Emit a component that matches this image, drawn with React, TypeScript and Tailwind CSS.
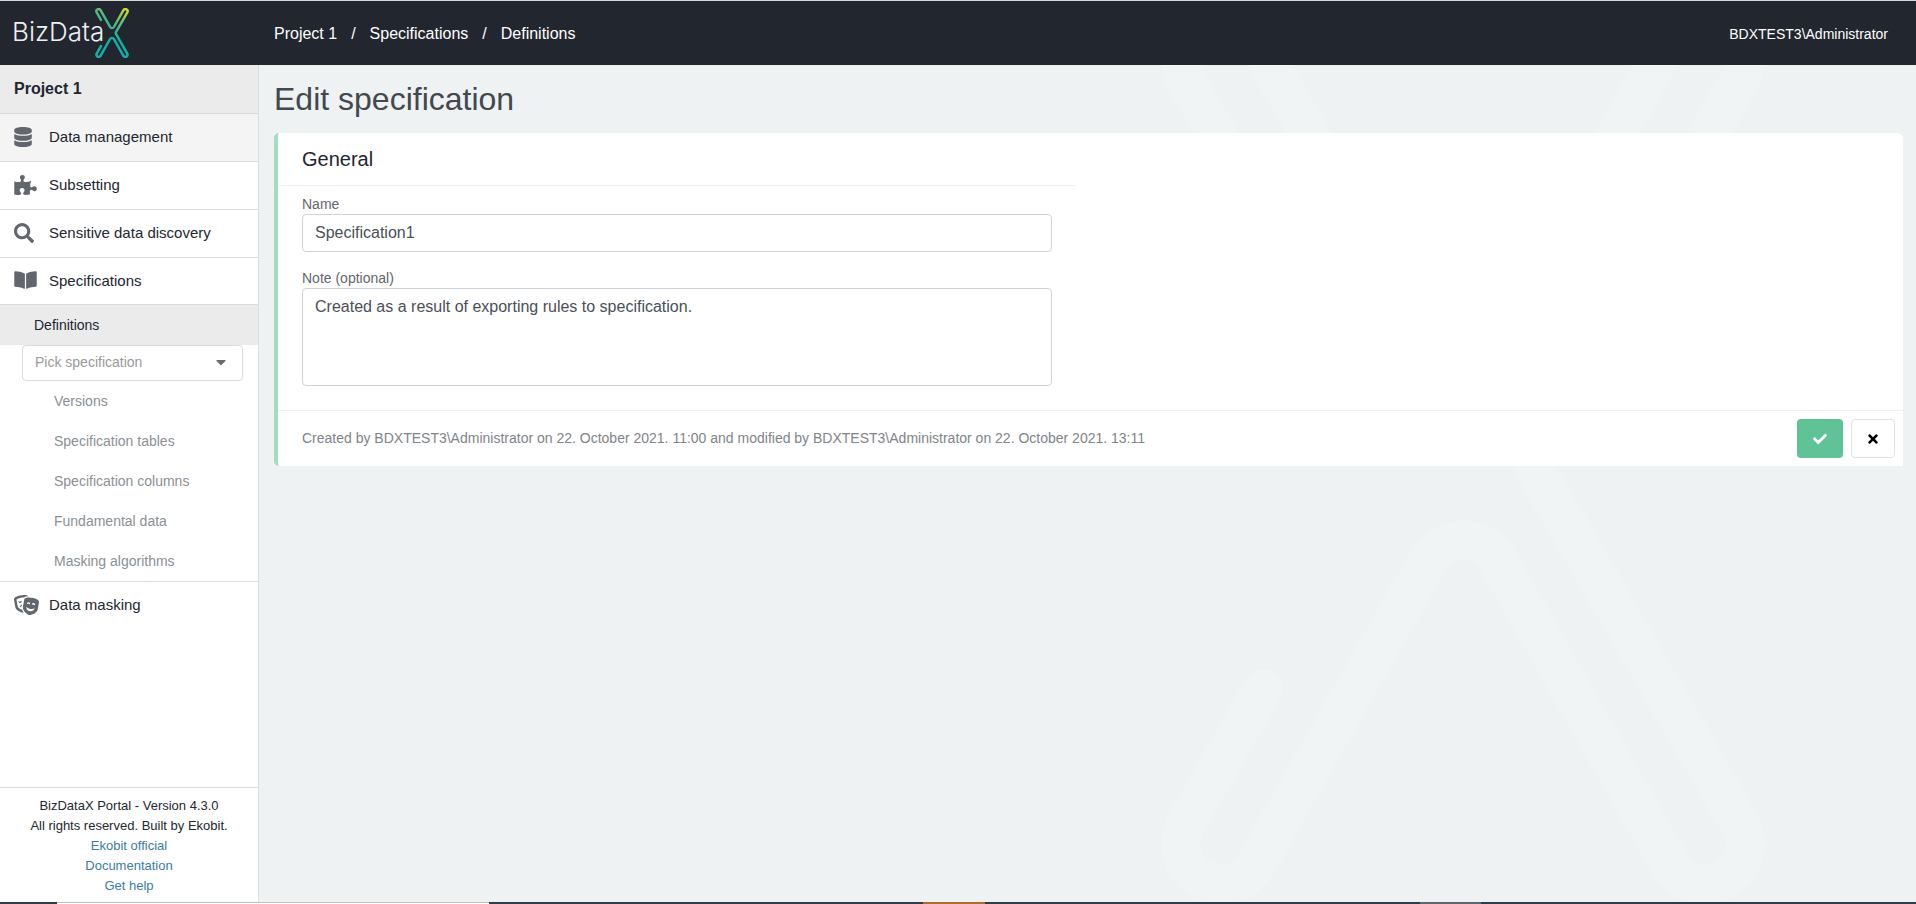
import { useId } from 'react'
import type { ReactNode } from 'react'
import {
  FaBookOpen,
  FaCaretDown,
  FaCheck,
  FaDatabase,
  FaPuzzlePiece,
  FaSearch,
  FaTheaterMasks,
  FaTimes,
} from 'react-icons/fa'

const X_PATH =
  'M104 215 L27 80 A40 40 0 1 1 97 40 L269 343 A40 40 0 0 0 339 343 L511 40 A40 40 0 1 1 581 80 L376 435 Q366 452 376 469 L581 824 A40 40 0 1 1 511 864 L339 561 A40 40 0 0 0 269 561 L97 864 A40 40 0 1 1 27 824 L104 689'

const breadcrumbs = ['Project 1', 'Specifications', 'Definitions']

const specificationLinks = [
  'Versions',
  'Specification tables',
  'Specification columns',
  'Fundamental data',
  'Masking algorithms',
]

const footerLinks = ['Ekobit official', 'Documentation', 'Get help']

const XMark = ({ className, stroke }: XMarkProps) => (
  <svg className={className} viewBox="0 0 608 904" fill="none" aria-hidden="true">
    <path d={X_PATH} stroke={stroke} strokeWidth="39" strokeLinecap="round" strokeLinejoin="round" />
  </svg>
)

const Logo = () => {
  const gradientId = useId()
  return (
    <a href="#" className="flex items-center text-[#eef0f1]">
      <span className="pb-[3px] font-[Inter,sans-serif] text-[26px] font-light leading-none">BizData</span>
      <svg className="-ml-[9px] h-[50px] w-[34px]" viewBox="0 0 608 904" fill="none" aria-hidden="true">
        <defs>
          <linearGradient id={gradientId} gradientUnits="userSpaceOnUse" x1="580" y1="20" x2="270" y2="520">
            <stop offset="0" stopColor="#d3dc2c" />
            <stop offset="0.5" stopColor="#5cba7d" />
            <stop offset="1" stopColor="#0fb2a8" />
          </linearGradient>
        </defs>
        <path d={X_PATH} stroke={`url(#${gradientId})`} strokeWidth="44" strokeLinecap="round" strokeLinejoin="round" />
      </svg>
    </a>
  )
}

const Header = () => (
  <header className="relative flex h-[65px] shrink-0 items-center border-t border-[#d3d8d6] bg-[#22262f] text-white">
    <div className="w-[259px] shrink-0 pl-3">
      <Logo />
    </div>
    <nav className="flex-1 pl-[15px] pt-px" aria-label="Breadcrumb">
      <ol className="flex items-center text-base">
        {breadcrumbs.map((crumb, idx) => (
          <li key={crumb} className="flex items-center">
            {idx > 0 && <span className="px-[14px]">/</span>}
            <a href="#">{crumb}</a>
          </li>
        ))}
      </ol>
    </nav>
    <span className="pr-7 pt-px text-sm">BDXTEST3\Administrator</span>
  </header>
)

const MenuItem = ({ icon, label, className = 'h-12' }: MenuItemProps) => (
  <a href="#" className={`flex items-center pl-[14px] text-[15px] text-[#22262f] ${className}`}>
    <span className="w-[35px] pb-0.5 text-[#62666d]">{icon}</span>
    {label}
  </a>
)

const Sidebar = () => (
  <aside className="flex w-[259px] shrink-0 flex-col border-r border-[#dcdfe0] bg-white">
    <h2 className="flex h-[49px] items-center border-b border-[#d8d8d8] bg-[#ebebeb] pl-[14px] text-base font-bold text-[#22262f]">
      Project 1
    </h2>
    <nav>
      <MenuItem icon={<FaDatabase className="h-5 w-[18px]" />} label="Data management" className="h-12 border-b border-[#dcdcdc] bg-[#f4f4f4]" />
      <MenuItem icon={<FaPuzzlePiece className="h-5 w-[23px]" />} label="Subsetting" className="h-12 border-b border-[#dcdcdc]" />
      <MenuItem icon={<FaSearch className="h-5 w-5" />} label="Sensitive data discovery" className="h-12 border-b border-[#dcdcdc]" />
      <MenuItem icon={<FaBookOpen className="h-5 w-[23px]" />} label="Specifications" className="h-[47px] border-b border-[#dcdcdc]" />
      <a href="#" className="flex h-10 items-center bg-[#ebebeb] pl-[34px] text-sm text-[#22262f]">
        Definitions
      </a>
      <div className="relative pl-[22px] pr-[15px]">
        <select
          aria-label="Pick specification"
          className="block h-9 w-full appearance-none rounded border border-[#dcdcdc] bg-white pb-0.5 pl-3 text-sm text-[#999999]"
        >
          <option>Pick specification</option>
        </select>
        <FaCaretDown className="pointer-events-none absolute right-[29px] top-[9px] h-4 w-4 text-[#6c6c6c]" />
      </div>
      <ul className="border-b border-[#dcdcdc]">
        {specificationLinks.map((label) => (
          <li key={label}>
            <a href="#" className="flex h-10 items-center pl-[54px] text-sm text-[#8b8f94]">
              {label}
            </a>
          </li>
        ))}
      </ul>
      <MenuItem icon={<FaTheaterMasks className="h-5 w-[25px]" />} label="Data masking" className="h-[47px]" />
    </nav>
    <footer className="mt-auto border-t border-[#dcdcdc] pb-1.5 pt-2 text-center text-[13px] leading-5 text-[#22262f]">
      <p>BizDataX Portal - Version 4.3.0</p>
      <p>All rights reserved. Built by Ekobit.</p>
      {footerLinks.map((label) => (
        <p key={label}>
          <a href="#" className="text-[#3a7ca3]">
            {label}
          </a>
        </p>
      ))}
    </footer>
  </aside>
)

const SpecificationForm = () => (
  <form className="rounded-l-[5px] rounded-tr-md border-l-4 border-[#a3dcc0] bg-white">
    <div className="pr-[30px]">
      <div className="w-1/2">
        <h2 className="border-b border-[#eef0f1] px-6 pb-3 pt-3 text-xl text-[#22262f]">General</h2>
        <div className="px-6 pb-6 pt-2">
          <label htmlFor="name" className="block text-sm leading-5 text-[#62666d]">
            Name
          </label>
          <input
            id="name"
            defaultValue="Specification1"
            className="block h-[38px] w-full rounded border border-[#ced2d8] px-3 text-base text-[#495057]"
          />
          <label htmlFor="note" className="mt-4 block text-sm leading-5 text-[#62666d]">
            Note (optional)
          </label>
          <textarea
            id="note"
            defaultValue="Created as a result of exporting rules to specification."
            className="block h-[98px] w-full resize-none rounded border border-[#ced2d8] px-3 py-[6px] text-base text-[#495057]"
          />
        </div>
      </div>
    </div>
    <div className="flex items-center justify-between border-t border-[#eef0f1] py-2 pl-6 pr-2">
      <p className="pb-0.5 text-sm text-[#808488]">
        Created by BDXTEST3\Administrator on 22. October 2021. 11:00 and modified by BDXTEST3\Administrator on 22. October 2021. 13:11
      </p>
      <div className="flex gap-2">
        <button type="submit" aria-label="Save" className="flex h-[39px] w-[46px] items-center justify-center rounded bg-[#5fc397] text-white">
          <FaCheck className="h-[14px] w-[14px]" />
        </button>
        <button type="button" aria-label="Cancel" className="flex h-[39px] w-11 items-center justify-center rounded border border-[#e2e2e4] bg-white text-black">
          <FaTimes className="h-[14px] w-[14px]" />
        </button>
      </div>
    </div>
  </form>
)

// Strip of window colours along the bottom edge
const BottomStrip = () => (
  <div className="relative flex h-[2px] shrink-0 bg-[#2f3e46]">
    <div className="ml-[3%] w-[22.5%] border-t border-[#bfc3c2] bg-white" />
    <div className="ml-[22.7%] w-[3.2%] bg-[#b06a2e]" />
    <div className="ml-[22.7%] w-[3.2%] bg-[#5d686c]" />
  </div>
)

const App = () => (
  <div className="relative flex min-h-screen flex-col overflow-hidden bg-[#eef2f3] font-['Liberation_Sans',Arial,sans-serif]">
    <XMark className="absolute right-[149px] top-0 h-full w-auto" stroke="#f1f4f5" />
    <Header />
    <div className="relative flex flex-1">
      <Sidebar />
      <main className="min-w-0 flex-1 pl-[15px] pr-[13px]">
        <h1 className="py-[14px] text-[32px] leading-10 text-[#43474e]">Edit specification</h1>
        <SpecificationForm />
      </main>
    </div>
    <BottomStrip />
  </div>
)

interface XMarkProps {
  className: string
  stroke: string
}

interface MenuItemProps {
  icon: ReactNode
  label: string
  className?: string
}

export default App
